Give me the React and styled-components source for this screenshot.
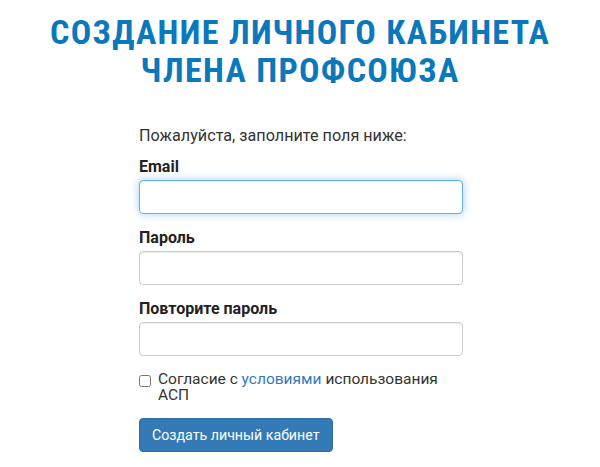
import * as React from "react";
import styled, { createGlobalStyle } from "styled-components";

const GlobalStyle = createGlobalStyle`
  body {
    margin: 0;
    background: #fff;
    font-family: Roboto, "Liberation Sans", Arial, sans-serif;
    color: #333;
  }
`;

const Page = styled.div`
  display: flex;
  flex-direction: column;
  align-items: center;
  padding-top: 13px;
`;

const Title = styled.h1`
  margin: 0;
  font-family: Roboto, "Liberation Sans", sans-serif;
  font-weight: 700;
  font-size: 34px;
  line-height: 38px;
  letter-spacing: 1.3px;
  font-stretch: 80%;
  color: #0b78bc;
  text-align: center;
  text-transform: uppercase;
`;

const Form = styled.form`
  width: 324px;
  margin-top: 37px;
  margin-left: 2px;
  display: flex;
  flex-direction: column;
`;

const Intro = styled.p`
  margin: 0 0 12px;
  font-size: 16.2px;
  line-height: 20px;
  color: #333;
`;

const Group = styled.div`
  display: flex;
  flex-direction: column;
  margin-bottom: 15px;
`;

const Label = styled.label`
  font-size: 16px;
  font-weight: 700;
  line-height: 18px;
  margin-bottom: 4px;
  color: #222;
`;

const Input = styled.input`
  box-sizing: border-box;
  height: 34px;
  width: 100%;
  padding: 6px 12px;
  font-size: 14px;
  border: 1px solid ${(p) => (p.$focused ? "#66afe9" : "#ccc")};
  border-radius: 4px;
  outline: none;
  box-shadow: ${(p) =>
    p.$focused
      ? "inset 0 1px 1px rgba(0,0,0,.075), 0 0 8px rgba(102,175,233,.6)"
      : "inset 0 1px 1px rgba(0,0,0,.075)"};
`;

const CheckRow = styled.label`
  display: flex;
  align-items: flex-start;
  gap: 7px;
  margin-top: 1px;
  margin-bottom: 15px;
  font-size: 15.5px;
  line-height: 15.5px;
  color: #333;
`;

const Box = styled.input`
  margin: 3px 0 0;
  width: 12px;
  height: 12px;
  flex: none;
`;

const Link = styled.a`
  color: #337ab7;
  text-decoration: none;
`;

const Submit = styled.button`
  align-self: flex-start;
  height: 34px;
  padding: 6px 12px;
  border: 1px solid #2e6da4;
  border-radius: 4px;
  background: #337ab7;
  color: #fff;
  font-family: Roboto, "Liberation Sans", sans-serif;
  font-size: 14.2px;
`;

export default function App() {
  return (
    <Page>
      <GlobalStyle />
      <Title>
        Создание личного кабинета
        <br />
        члена профсоюза
      </Title>
      <Form onSubmit={(e) => e.preventDefault()}>
        <Intro>Пожалуйста, заполните поля ниже:</Intro>
        <Group>
          <Label htmlFor="email">Email</Label>
          <Input id="email" type="email" $focused />
        </Group>
        <Group>
          <Label htmlFor="password">Пароль</Label>
          <Input id="password" type="password" />
        </Group>
        <Group>
          <Label htmlFor="password2">Повторите пароль</Label>
          <Input id="password2" type="password" />
        </Group>
        <CheckRow>
          <Box type="checkbox" />
          <span>
            Согласие с <Link href="#">условиями</Link> использования АСП
          </span>
        </CheckRow>
        <Submit type="submit">Создать личный кабинет</Submit>
      </Form>
    </Page>
  );
}
